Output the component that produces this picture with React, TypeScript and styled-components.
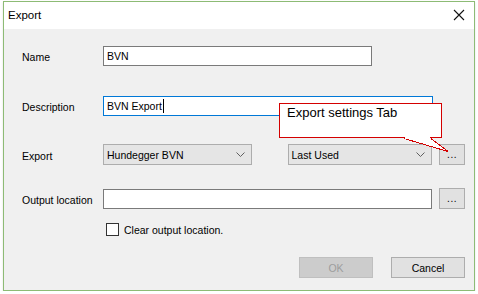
import React, { FC, ReactNode } from 'react'
import styled, { createGlobalStyle } from 'styled-components'

const GlobalStyle = createGlobalStyle`
  html, body {
    margin: 0;
    padding: 0;
    background: #ffffff;
  }
  body {
    font-family: "Liberation Sans", Arial, sans-serif;
    font-size: 10.5px;
    color: #000000;
  }
`

const Window = styled.div`
  position: relative;
  box-sizing: border-box;
  margin: 1px 0 0 3px;
  width: 472px;
  height: 290px;
  border: 1px solid #8dbb75;
  background: #f0f0f0;
  display: flex;
  flex-direction: column;
  box-shadow: 0 1px 2px rgba(0, 0, 0, 0.12);
`

const TitleBar = styled.div`
  height: 27px;
  background: #ffffff;
  display: flex;
  align-items: center;
  justify-content: space-between;
  padding: 0 9px 0 4px;
`

const Title = styled.span`
  font-size: 11.5px;
  margin-top: -2px;
`

const CloseButton = styled.span`
  display: flex;
  width: 12px;
  height: 12px;
  margin-top: -2px;
`

const Content = styled.div`
  flex: 1;
  display: flex;
  flex-direction: column;
  padding: 17px 9px 0 18px;
`

const Row = styled.div<{ $top?: number; $height?: number }>`
  display: flex;
  align-items: center;
  margin-top: ${({ $top }) => $top ?? 0}px;
  height: ${({ $height }) => $height ?? 20}px;
`

const Label = styled.span`
  width: 81px;
  flex-shrink: 0;
  margin-top: 2px;
`

const TextBox = styled.div<{ $width: number; $focused?: boolean }>`
  box-sizing: border-box;
  width: ${({ $width }) => $width}px;
  height: 20px;
  background: #ffffff;
  border: 1px solid ${({ $focused }) => ($focused ? '#0078d7' : '#7a7a7a')};
  padding: 0 3px;
  display: flex;
  align-items: center;
  line-height: 18px;
`

const Caret = styled.span`
  display: inline-block;
  width: 1px;
  height: 14px;
  background: #000000;
  margin-left: 1px;
`

const Combo = styled.div<{ $width: number }>`
  box-sizing: border-box;
  width: ${({ $width }) => $width}px;
  height: 21px;
  background: #e5e5e5;
  border: 1px solid #adadad;
  display: flex;
  align-items: center;
  justify-content: space-between;
  padding: 0 6px 0 3px;
`

const SmallButton = styled.div`
  box-sizing: border-box;
  width: 26px;
  height: 21px;
  margin-left: 7px;
  background: #e1e1e1;
  border: 1px solid #adadad;
  display: flex;
  align-items: flex-end;
  justify-content: center;
  padding-bottom: 4px;
  font-size: 10px;
  letter-spacing: 0.5px;
`

const CheckRow = styled.label`
  display: flex;
  align-items: center;
  margin-left: 84px;
  gap: 5px;
`

const CheckBox = styled.span`
  box-sizing: border-box;
  width: 13px;
  height: 13px;
  border: 1px solid #333333;
  background: #ffffff;
`

const Footer = styled.div`
  display: flex;
  justify-content: flex-end;
  gap: 18px;
  margin-top: 21px;
`

const DialogButton = styled.div<{ $disabled?: boolean }>`
  box-sizing: border-box;
  width: 74px;
  height: 21px;
  display: flex;
  align-items: center;
  justify-content: center;
  padding-top: 1px;
  background: ${({ $disabled }) => ($disabled ? '#cccccc' : '#e1e1e1')};
  border: 1px solid ${({ $disabled }) => ($disabled ? '#bfbfbf' : '#adadad')};
  color: ${({ $disabled }) => ($disabled ? '#9d9d9d' : '#000000')};
`

const Callout = styled.div`
  position: absolute;
  left: 275px;
  top: 101px;
  box-sizing: border-box;
  width: 163px;
  height: 35px;
  background: #ffffff;
  border: 1px solid #d40000;
`

const CalloutPointer = styled.svg`
  position: absolute;
  left: 124px;
  top: 32px;
`

const CalloutText = styled.span`
  display: block;
  padding: 1px 0 0 7px;
  font-size: 13px;
  line-height: 15px;
`

const Chevron: FC = () => (
  <svg width="9" height="5" viewBox="0 0 9 5">
    <path d="M0.5 0.5 L4.5 4.5 L8.5 0.5" fill="none" stroke="#606060" strokeWidth="1" />
  </svg>
)

const Field: FC<{ label: string; top?: number; height?: number; children: ReactNode }> = ({
  label,
  top,
  height,
  children,
}) => (
  <Row $top={top} $height={height}>
    <Label>{label}</Label>
    {children}
  </Row>
)

export default function App() {
  return (
    <>
      <GlobalStyle />
      <Window>
        <TitleBar>
          <Title>Export</Title>
          <CloseButton>
            <svg width="12" height="12" viewBox="0 0 12 12">
              <path d="M1 1 L11 11 M11 1 L1 11" stroke="#111111" strokeWidth="1.1" />
            </svg>
          </CloseButton>
        </TitleBar>
        <Content>
          <Field label="Name">
            <TextBox $width={269}>BVN</TextBox>
          </Field>
          <Field label="Description" top={29} height={21}>
            <TextBox $width={330} $focused>
              BVN Export
              <Caret />
            </TextBox>
          </Field>
          <Field label="Export" top={28} height={21}>
            <Combo $width={149}>
              <span>Hundegger BVN</span>
              <Chevron />
            </Combo>
            <Combo $width={145} style={{ marginLeft: 36 }}>
              <span>Last Used</span>
              <Chevron />
            </Combo>
            <SmallButton>...</SmallButton>
          </Field>
          <Field label="Output location" top={23} height={21}>
            <TextBox $width={330} />
            <SmallButton>...</SmallButton>
          </Field>
          <Row $top={14} $height={13}>
            <CheckRow>
              <CheckBox />
              <span>Clear output location.</span>
            </CheckRow>
          </Row>
          <Footer>
            <DialogButton $disabled>OK</DialogButton>
            <DialogButton>Cancel</DialogButton>
          </Footer>
        </Content>
        <Callout>
          <CalloutText>Export settings Tab</CalloutText>
          <CalloutPointer width="48" height="18" viewBox="0 0 48 18" shapeRendering="crispEdges">
            <path d="M0 2.5 L44 15.5 L27 2.5" fill="#ffffff" stroke="#d40000" strokeWidth="1" />
            <rect x="1" y="0" width="25" height="3" fill="#ffffff" />
          </CalloutPointer>
        </Callout>
      </Window>
    </>
  )
}
